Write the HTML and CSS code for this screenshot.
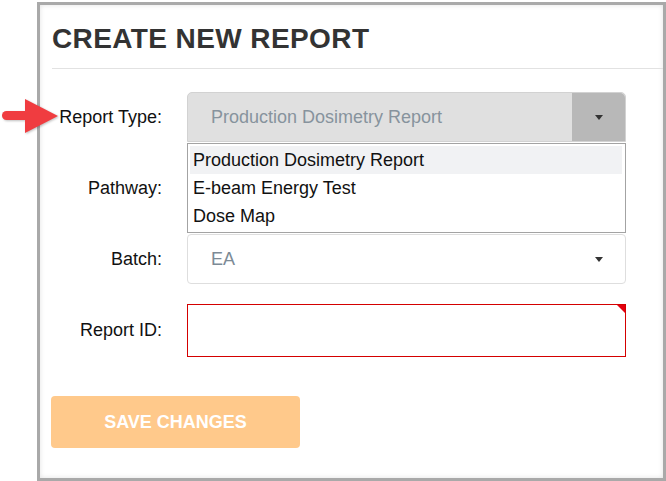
FILE: index.html
```html
<!DOCTYPE html>
<html lang="en">
<head>
  <meta charset="UTF-8">
  <meta name="viewport" content="width=device-width, initial-scale=1.0">
  <link rel="stylesheet" href="styles.css">
</head>
<body>
<div class="panel">
  <h1 class="title">CREATE NEW REPORT</h1>
  <form class="report-form">
    <div class="row">
      <label>Report Type:</label>
      <div class="field select locked">
        <span class="value">Production Dosimetry Report</span>
        <span class="caret-box"><span class="caret"></span></span>
        <ul class="options">
          <li class="hover">Production Dosimetry Report</li>
          <li>E-beam Energy Test</li>
          <li>Dose Map</li>
        </ul>
      </div>
    </div>
    <div class="row">
      <label>Pathway:</label>
      <div class="field select">
        <span class="value"></span>
        <span class="caret-box"><span class="caret"></span></span>
      </div>
    </div>
    <div class="row">
      <label>Batch:</label>
      <div class="field select">
        <span class="value">EA</span>
        <span class="caret-box"><span class="caret"></span></span>
      </div>
    </div>
    <div class="row tall">
      <label>Report ID:</label>
      <div class="field input required"></div>
    </div>
    <button type="button" class="save">SAVE CHANGES</button>
  </form>
</div>

<svg class="pointer" width="60" height="36" viewBox="0 0 60 36">
  <rect x="2" y="13" width="30" height="9" rx="4.5" fill="#f03c40"/>
  <path d="M25 1 L58 18 L25 35 Z" fill="#f03c40"/>
</svg>
</body>
</html>
```

FILE: styles.css
```css
body {
  margin: 0;
  font-family: "Liberation Sans", Arial, sans-serif;
  background: #fff;
  overflow: hidden;
}

.panel {
  box-sizing: border-box;
  width: 629px;
  height: 479px;
  margin: 2px 0 0 37px;
  border: 3px solid #a9a9a9;
  box-shadow: inset 0 0 5px rgba(0, 0, 0, 0.12);
}

.title {
  margin: 0 0 0 12px;
  padding: 18px 0 13px;
  font-size: 28px;
  line-height: 32px;
  font-weight: bold;
  letter-spacing: 0.4px;
  color: #333;
  border-bottom: 1px solid #e2e2e2;
}

.report-form {
  padding-top: 23px;
}

.row {
  display: flex;
  align-items: center;
  gap: 25px;
  height: 50px;
  margin-bottom: 21px;
}

.row.tall {
  height: 53px;
  margin-top: -1px;
}

.row label {
  width: 122px;
  text-align: right;
  font-size: 18px;
  color: #111;
}

.field {
  position: relative;
  box-sizing: border-box;
  width: 439px;
  height: 100%;
}

.select {
  display: flex;
  border: 1px solid #dedede;
  border-radius: 4px;
  background: #fff;
}

.select .value {
  flex: 1;
  padding-left: 23px;
  line-height: 48px;
  font-size: 18px;
  color: #7c8a96;
}

.caret-box {
  display: flex;
  align-items: center;
  justify-content: center;
  width: 53px;
}

.caret {
  border-left: 4px solid transparent;
  border-right: 4px solid transparent;
  border-top: 5px solid #333;
}

.locked {
  background: #e0e0e0;
  border-color: #d2d2d2;
  border-radius: 5px 5px 0 0;
}

.locked .value {
  color: #87939d;
}

.locked .caret-box {
  background: #b8b8b8;
  border-radius: 0 5px 0 0;
}

.options {
  position: absolute;
  top: 50px;
  left: -1px;
  z-index: 2;
  box-sizing: border-box;
  width: 439px;
  margin: 0;
  padding: 2px 3px 2px 2px;
  list-style: none;
  background: #fff;
  border: 1px solid #a3a3a3;
}

.options li {
  height: 28px;
  line-height: 28px;
  padding-left: 3px;
  font-size: 18px;
  color: #111;
}

.options li.hover {
  background: #f1f2f4;
}

.input {
  border: 1px solid #d40000;
}

.required::after {
  content: "";
  position: absolute;
  top: 0;
  right: 0;
  border-top: 8px solid #e3000f;
  border-left: 8px solid transparent;
}

.save {
  display: block;
  width: 249px;
  height: 52px;
  margin: 39px 0 0 11px;
  border: none;
  border-radius: 4px;
  background: #ffc98b;
  color: #fff;
  font-family: "Liberation Sans", Arial, sans-serif;
  font-size: 18px;
  font-weight: bold;
}

.pointer {
  position: absolute;
  left: 0;
  top: 98px;
  filter: drop-shadow(1px 1px 1px rgba(0, 0, 0, 0.25));
}
```
